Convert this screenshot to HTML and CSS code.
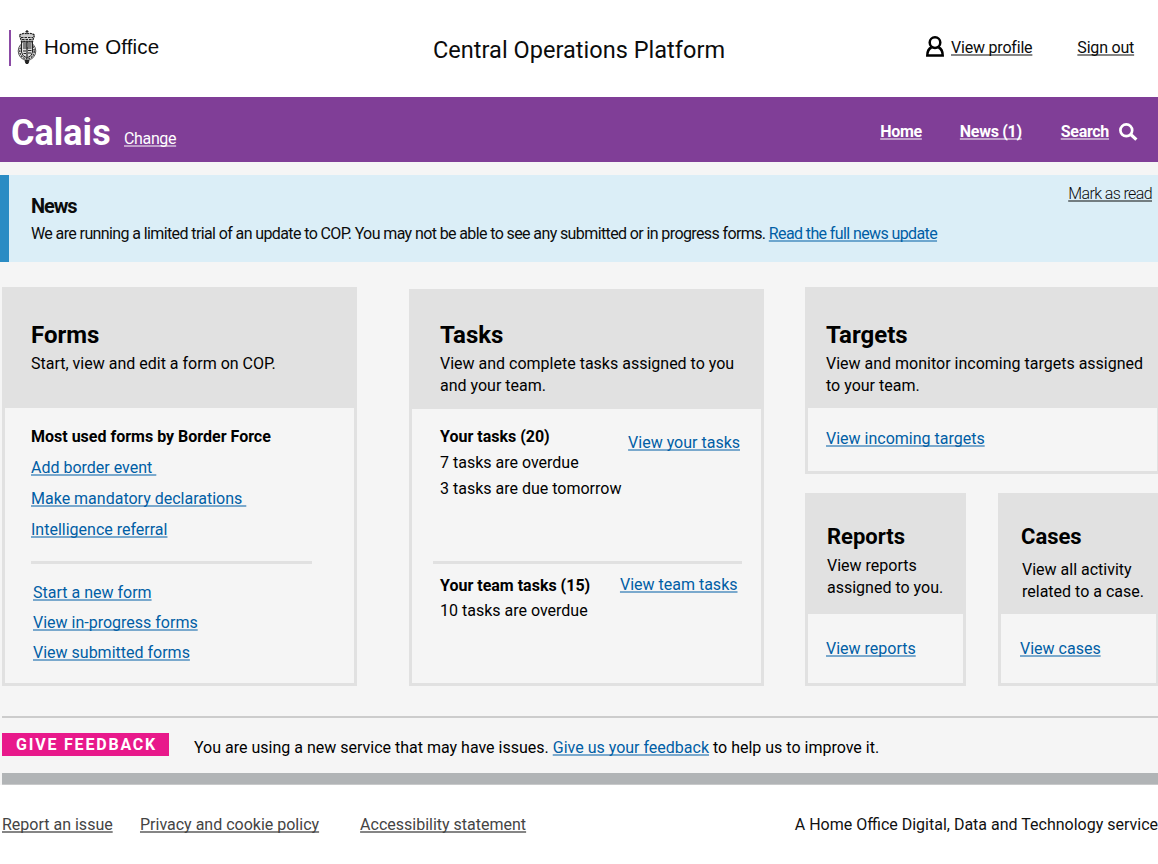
FILE: index.html
```html
<!DOCTYPE html>
<html lang="en">
<head>
<meta charset="utf-8">
<title>Central Operations Platform</title>
<link rel="stylesheet" href="styles.css">
</head>
<body>
<header class="top">
  <div class="logo">
    <svg class="crest" width="20" height="36" viewBox="0 0 20 36" fill="none" stroke="#222">
      <path d="M10 0v4M8.500 1.500h3" stroke-width="1.200"/>
      <path d="M2.500 5q4-2.500 7.500-1.200q3.500-1.300 7.500 1.200l-2 6.500h-11z" fill="#ccc" stroke-width="1.300" stroke-dasharray="2 .7"/>
      <path d="M4 7.500h12M5 9.500h10" stroke-width="1.200" stroke-dasharray="2.500 1"/>
      <ellipse cx="10" cy="21" rx="8.800" ry="9.300" stroke="#555" stroke-width="1"/>
      <ellipse cx="10" cy="21" rx="7.200" ry="7.900" stroke="#444" stroke-width="1.600" stroke-dasharray="2 .8"/>
      <path d="M4.500 12h11v10q0 4-5.500 6q-5.500-2-5.500-6z" fill="#ddd" stroke-width="1"/>
      <path d="M6 14h3.500M11 14h3.500M6 16h3.500M11 16h3.500M6 18h8.500M6 21h3M11 20.500h3.500M11 23h3M6.500 23.500h2.500M10 12v15" stroke-width="1.200"/>
      <path d="M8 30.500h4l-1 3h-2z" fill="#222"/>
    </svg>
    <span class="brand">Home Office</span>
  </div>
  <div class="product">Central Operations Platform</div>
  <nav class="account">
    <svg class="person" width="18" height="21" viewBox="0 0 18 21" fill="none" stroke="#000" stroke-width="2.500"><circle cx="9" cy="6.600" r="5.300"/><path d="M5.500 11.500Q1.300 13.300 1.300 19.500H16.700Q16.700 13.300 12.500 11.500"/></svg>
    <a class="profile" href="#">View profile</a>
    <a class="signout" href="#">Sign out</a>
  </nav>
</header>
<div class="bar">
  <h1 class="place">Calais</h1>
  <a class="change" href="#">Change</a>
  <nav class="menu">
    <a class="m-home" href="#">Home</a>
    <a class="m-news" href="#">News (1)</a>
    <a class="m-search" href="#">Search</a>
    <svg class="glass" width="19" height="18" viewBox="0 0 19 18" fill="none" stroke="#fff"><circle cx="7.300" cy="7.300" r="5.900" stroke-width="2.700"/><path d="M11.500 11.200L17.400 16.600" stroke-width="3.200"/></svg>
  </nav>
</div>
<main>
  <section class="news">
    <div class="news-body">
      <h2 class="news-title">News</h2>
      <p class="news-text">We are running a limited trial of an update to COP. You may not be able to see any submitted or in progress forms. <a class="link" href="#">Read the full news update</a></p>
    </div>
    <a class="mark" href="#">Mark as read</a>
  </section>
  <div class="cards">
    <section class="card forms">
      <div class="head"><h2>Forms</h2><p>Start, view and edit a form on COP.</p></div>
      <h3>Most used forms by Border Force</h3>
      <ul class="used">
        <li><a class="link pad" href="#">Add border event </a></li>
        <li><a class="link pad" href="#">Make mandatory declarations </a></li>
        <li><a class="link" href="#">Intelligence referral</a></li>
      </ul>
      <hr class="rule">
      <ul class="all">
        <li><a class="link" href="#">Start a new form</a></li>
        <li><a class="link" href="#">View in-progress forms</a></li>
        <li><a class="link" href="#">View submitted forms</a></li>
      </ul>
    </section>
    <section class="card tasks">
      <div class="head"><h2>Tasks</h2><p>View and complete tasks assigned to you<br>and your team.</p></div>
      <div class="group mine">
        <div><h3>Your tasks (20)</h3><p>7 tasks are overdue</p><p>3 tasks are due tomorrow</p></div>
        <a class="link" href="#">View your tasks</a>
      </div>
      <hr class="rule">
      <div class="group team">
        <div><h3>Your team tasks (15)</h3><p>10 tasks are overdue</p></div>
        <a class="link" href="#">View team tasks</a>
      </div>
    </section>
    <div class="side">
      <section class="card targets">
        <div class="head"><h2>Targets</h2><p>View and monitor incoming targets assigned<br>to your team.</p></div>
        <a class="link" href="#">View incoming targets</a>
      </section>
      <div class="pair">
        <section class="card small reports">
          <div class="head"><h2>Reports</h2><p>View reports<br>assigned to you.</p></div>
          <a class="link" href="#">View reports</a>
        </section>
        <section class="card small cases">
          <div class="head"><h2>Cases</h2><p>View all activity<br>related to a case.</p></div>
          <a class="link" href="#">View cases</a>
        </section>
      </div>
    </div>
  </div>
  <section class="feedback">
    <span class="tag">GIVE FEEDBACK</span>
    <p class="notice">You are using a new service that may have issues. <a class="link" href="#">Give us your feedback</a> to help us to improve it.</p>
  </section>
</main>
<footer class="foot">
  <a class="f1" href="#">Report an issue</a>
  <a class="f2" href="#">Privacy and cookie policy</a>
  <a class="f3" href="#">Accessibility statement</a>
  <span class="owner">A Home Office Digital, Data and Technology service</span>
</footer>
</body>
</html>
```
FILE: styles.css
```css
* { box-sizing: border-box; margin: 0; padding: 0; }
body { width: 1158px; height: 864px; overflow: hidden; background: #fff; color: #0b0c0c; font: 16px/22px Roboto, sans-serif; }
ul { list-style: none; }
a { color: inherit; text-decoration: underline; text-decoration-thickness: 2px; text-underline-offset: 1px; text-decoration-skip-ink: none; text-decoration-color: rgba(11,12,12,.5); white-space: nowrap; }
.link { color: #005ea5; text-decoration-color: rgba(0,94,165,.5); }
.pad { white-space: pre; }
.top { display: flex; height: 97px; }
.logo { display: flex; height: 36px; margin: 30px 0 0 9px; border-left: 2px solid #8b4aa5; flex: 0 0 424px; }
.crest { margin-left: 6px; }
.brand { margin-left: 7px; font: 20.5px/34px "Liberation Sans", sans-serif; letter-spacing: .15px; }
.product { width: 492px; padding-top: 38px; font-size: 23.5px; line-height: 24px; letter-spacing: .03px; }
.account { display: flex; flex: 1; padding-top: 37px; letter-spacing: -.2px; }
.person { margin: -1px 7px 0 1px; }
.signout { margin-left: 45px; }
.bar { display: flex; height: 65px; background: #803e97; color: #fff; }
.bar a { text-decoration-color: rgba(255,255,255,.5); }
.place { width: 113px; margin-left: 11px; font-size: 36px; line-height: 73px; }
.change { padding-top: 31px; letter-spacing: -.35px; }
.menu { display: flex; margin-left: auto; padding: 24px 20px 0 0; font-weight: 700; letter-spacing: -.3px; }
.m-home { margin-right: 38px; }
.m-news { margin-right: 39px; }
.glass { margin: 2px 0 0 10px; }
main { height: 623px; padding-top: 13px; background: #f5f5f5; }
.news { display: flex; justify-content: space-between; height: 87px; padding: 20px 6px 0 22px; border-left: 9px solid #2b8cc4; background: #dbeef7; letter-spacing: -.61px; }
.news-title { font-size: 20px; line-height: 22px; letter-spacing: -1.1px; }
.news-text { margin-top: 6px; }
.mark { margin-top: -12px; font-weight: 300; }
.cards { display: flex; align-items: flex-start; height: 429px; margin-left: 2px; padding-top: 25px; color: #000; }
.card { width: 355px; height: 399px; flex: none; border: 3px solid #e1e1e1; }
.head { height: 118px; padding: 32px 0 0 26px; background: #e1e1e1; }
.head p { margin-top: 5px; white-space: nowrap; }
h2 { font-size: 24px; line-height: 26px; }
h3 { font-size: 16px; }
.forms h3 { margin: 18px 0 0 26px; }
.used { margin: 9px 0 0 26px; }
.used li { height: 31px; }
.rule { width: 281px; height: 3px; border: 0; margin: 11px 0 0 26px; background: #e1e1e1; }
.all { margin: 18px 0 0 28px; }
.all li { height: 30px; }
.tasks { height: 397px; margin: 2px 0 0 52px; }
.tasks .head { height: 117px; padding: 30px 0 0 28px; }
.group { display: flex; justify-content: space-between; padding: 0 21px 0 28px; }
.mine { height: 152px; padding-top: 17px; }
.mine p { margin-top: 4px; }
.mine .link { margin-top: 6px; }
.tasks .rule { width: 309px; margin: 0 0 0 21px; }
.team { padding: 11px 23.5px 0 28px; }
.team p { margin-top: 3px; }
.team .link { margin-top: -1px; }
.side { width: 355px; margin-left: 41px; flex: none; }
.targets { height: 187px; }
.targets .head { padding-left: 18px; }
.targets .link, .small .link { display: inline-block; margin: 20px 0 0 18px; }
.pair { display: flex; gap: 32px; margin-top: 19px; }
.small { width: 161px; height: 193px; }
.small .head { padding: 28px 0 0 19px; }
.small h2 { font-size: 22px; }
.small .head p { margin-top: 5px; }
.small .link { margin-top: 24px; }
.cases .head { padding-left: 20px; }
.cases .head p { margin: 9px 0 0 1px; }
.cases .link { margin-left: 19px; }
.feedback { display: flex; height: 68px; margin: 25px 0 0 2px; border-top: 2px solid #ccc; border-bottom: 11px solid #b1b4b6; box-shadow: 0 1px #c8c9ca; color: #000; }
.tag { width: 167px; height: 23px; margin-top: 15px; padding-left: 14px; background: #e8198b; color: #fff; font-weight: 700; line-height: 23px; letter-spacing: 1.8px; }
.notice { margin: 19px 0 0 25px; }
.foot { display: flex; height: 79px; padding: 29px 0 0 2px; color: #444; }
.f2 { margin-left: 27.3px; }
.f3 { margin-left: 41px; }
.owner { margin-left: auto; color: #111; white-space: nowrap; }
```
